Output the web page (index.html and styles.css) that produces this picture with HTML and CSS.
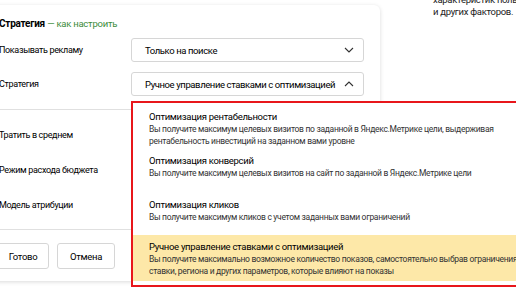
FILE: index.html
```html
<!DOCTYPE html>
<html>
<head>
  <meta charset="UTF-8">
  <title>Стратегия</title>
  <link rel="stylesheet" href="styles.css">
</head>
<body>
  <div class="page">
    <div class="card">
      <div class="card-title">Стратегия <span class="help">— как настроить</span></div>

      <div class="row">
        <div class="label">Показывать рекламу</div>
        <div class="select">
          <span>Только на поиске</span>
          <svg class="chevron" width="10" height="6" viewBox="0 0 10 6"><path d="M1 1l4 4 4-4" fill="none" stroke="#333" stroke-width="1.1"/></svg>
        </div>
      </div>
      <div class="row">
        <div class="label">Стратегия</div>
        <div class="select">
          <span>Ручное управление ставками с оптимизацией</span>
          <svg class="chevron" width="10" height="6" viewBox="0 0 10 6"><path d="M1 5l4-4 4 4" fill="none" stroke="#333" stroke-width="1.1"/></svg>
        </div>
      </div>

      <div class="section">
        <div class="line">Тратить в среднем</div>
        <div class="line">Режим расхода бюджета</div>
        <div class="line">Модель атрибуции</div>
      </div>

      <div class="buttons">
        <button class="btn">Готово</button>
        <button class="btn btn-wide">Отмена</button>
      </div>
    </div>

    <div class="side">
      <p>характеристик пользователя<br>и других факторов.</p>
    </div>
  </div>

  <!-- выпадающий список стратегий -->
  <div class="dropdown">
    <div class="opt">
      <div class="opt-title">Оптимизация рентабельности</div>
      <div class="opt-text">Вы получите максимум целевых визитов по заданной в Яндекс.Метрике цели, выдерживая<br>рентабельность инвестиций на заданном вами уровне</div>
    </div>
    <div class="opt">
      <div class="opt-title">Оптимизация конверсий</div>
      <div class="opt-text">Вы получите максимум целевых визитов на сайт по заданной в Яндекс.Метрике цели</div>
    </div>
    <div class="opt">
      <div class="opt-title">Оптимизация кликов</div>
      <div class="opt-text">Вы получите максимум кликов с учетом заданных вами ограничений</div>
    </div>
    <div class="opt opt-active">
      <div class="opt-title">Ручное управление ставками с оптимизацией</div>
      <div class="opt-text">Вы получите максимально возможное количество показов, самостоятельно выбрав ограничения<br>ставки, региона и других параметров, которые влияют на показы</div>
    </div>
  </div>
</body>
</html>
```

FILE: styles.css
```css
html, body {
  margin: 0;
  padding: 0;
  background: #fff;
  overflow: hidden;
}
body {
  width: 516px;
  height: 290px;
  position: relative;
  font-family: Roboto, "Noto Sans", sans-serif;
  color: #000;
}
.page {
  display: flex;
  align-items: flex-start;
}
.card {
  flex: none;
  width: 365px;
  margin: 5px 0 0 -10px;
  padding: 11px 16px 12px 9px;
  background: #fff;
  border-radius: 6px;
  box-shadow: 0 1px 4px rgba(0, 0, 0, 0.15);
}
.card-title {
  font-size: 10px;
  font-weight: bold;
  line-height: 16px;
  margin-bottom: 6px;
  letter-spacing: -0.25px;
}
.help {
  font-weight: normal;
  font-size: 9.5px;
  color: #3c8c3c;
}
.row {
  display: flex;
  align-items: center;
  margin-bottom: 10px;
}
.label {
  width: 132px;
  font-size: 9px;
  letter-spacing: -0.35px;
}
.select {
  flex: 1;
  min-width: 0;
  height: 24px;
  box-sizing: border-box;
  border: 1px solid #d6d6d6;
  border-radius: 3px;
  padding: 0 9px 0 13px;
  display: flex;
  align-items: center;
  justify-content: space-between;
  font-size: 9.5px;
  letter-spacing: -0.4px;
  white-space: nowrap;
  overflow: hidden;
}
.section {
  margin-top: 13px;
  border-top: 1px solid #e0e0e0;
  border-bottom: 1px solid #e0e0e0;
  padding: 7px 0;
}
.line {
  height: 35px;
  display: flex;
  align-items: center;
  font-size: 9px;
  letter-spacing: -0.35px;
}
.buttons {
  display: flex;
  gap: 8px;
  padding-top: 13px;
  margin-left: -2px;
}
.btn {
  height: 26px;
  width: 52px;
  background: #fff;
  border: 1px solid #d6d6d6;
  border-radius: 3px;
  font-family: inherit;
  font-size: 9.5px;
  letter-spacing: -0.3px;
  color: #000;
}
.btn-wide {
  width: 58px;
}
.side {
  margin: -6px 0 0 53px;
  font-size: 9.5px;
  line-height: 12px;
  letter-spacing: -0.3px;
  color: #222;
}
.side p {
  margin: 0;
  white-space: nowrap;
}
.dropdown {
  position: absolute;
  left: 131px;
  top: 101px;
  width: 420px;
  padding: 4px 0;
  background: #fff;
  border: 2px solid #e8161b;
}
.opt {
  min-height: 44px;
  box-sizing: border-box;
  padding: 4px 16px;
}
.opt-active {
  margin-top: -4px;
  padding: 6px 16px 4px;
  background: #fde8a8;
}
.opt-title {
  font-size: 9.5px;
  line-height: 12px;
  letter-spacing: -0.3px;
  color: #000;
}
.opt-text {
  font-size: 8.5px;
  line-height: 12px;
  letter-spacing: -0.3px;
  color: #333;
  white-space: nowrap;
}
```
